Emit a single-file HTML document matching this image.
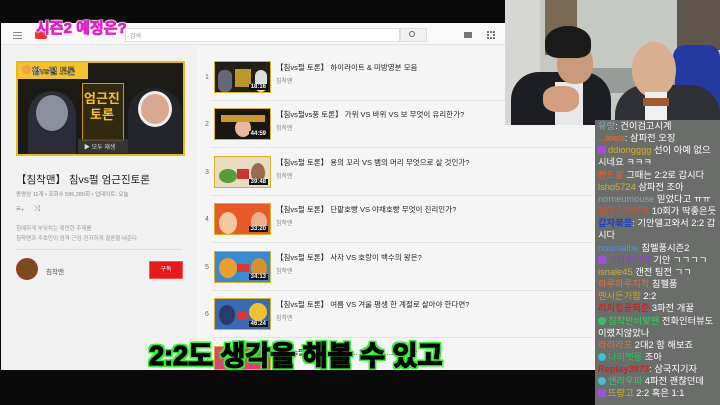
<!DOCTYPE html>
<html><head><meta charset="utf-8"><style>
*{margin:0;padding:0;box-sizing:border-box}
body{width:720px;height:405px;background:#0a0a0a;position:relative;overflow:hidden;font-family:"Liberation Sans","Noto Sans CJK KR",sans-serif}
.a{position:absolute}
.t{white-space:nowrap}
.item .n{position:absolute;left:205px;font-size:7px;color:#666}
.th{position:absolute;left:214px;width:57px;height:32px;border:1px solid #d8b030;overflow:hidden}
.th .d{position:absolute;right:2px;bottom:2px;background:#111;color:#fff;font-size:6px;padding:0 2px;font-weight:bold}
.ti{position:absolute;left:276px;font-size:7.5px;color:#222}
.ch{position:absolute;left:276px;font-size:6px;color:#888}
.hr{position:absolute;left:212px;width:380px;height:1px;background:#e2e2e2}
.chat{position:absolute;left:595px;top:120px;width:125px;height:285px;background:#6b6d6b;font-size:9.3px;line-height:12.15px;color:#fff;padding-left:3px;overflow:hidden}
.chat div{white-space:nowrap}
.b{display:inline-block;width:8px;height:8px;border-radius:1px;vertical-align:-1px;margin-right:2px}
</style></head><body>
<!-- browser -->
<div class="a" style="left:1px;top:23px;width:594px;height:347px;background:#f1f1f1"></div>
<div class="a" style="left:1px;top:23px;width:504px;height:22px;background:#f8f8f8;border-bottom:1px solid #e4e4e4"></div>
<div class="a" style="left:13px;top:32px;width:9px;height:1px;background:#888;box-shadow:0 3px #888,0 6px #888"></div>
<div class="a" style="left:35px;top:31px;width:12px;height:8px;background:#e33;border-radius:2px"></div>
<div class="a" style="left:125px;top:28px;width:275px;height:14px;background:#fff;border:1px solid #ddd;font-size:6px;color:#999;padding:2px 4px">검색</div>
<div class="a" style="left:400px;top:28px;width:27px;height:14px;background:#f0f0f0;border:1px solid #ddd"></div>
<div class="a" style="left:409px;top:31px;width:6px;height:6px;border:1px solid #666;border-radius:50%"></div>
<div class="a" style="left:464px;top:32px;width:8px;height:6px;background:#777"></div>
<div class="a" style="left:487px;top:31px;width:8px;height:8px;border:2px dotted #777"></div>
<div class="a t" style="left:36px;top:17px;font-size:15px;font-weight:bold;color:#e020c8;-webkit-text-stroke:0.8px #e020c8;text-shadow:0 0 1px #fff,1px 1px 1px #fff,-1px -1px 1px #fff,1px -1px 1px #fff,-1px 1px 1px #fff">시즌2 예정은?</div>
<!-- left panel -->
<div class="a" style="left:16px;top:61px;width:169px;height:95px;background:#1b1a15;border:2px solid #e8b822;overflow:hidden">
 <div class="a" style="left:0;top:0;width:70px;height:16px;background:#f2c230"></div>
 <div class="a t" style="left:14px;top:2px;font-size:8.5px;font-weight:bold;color:#fff;-webkit-text-stroke:.5px #222">침vs펄 토론</div>
 <div class="a" style="left:4px;top:2px;width:9px;height:9px;border-radius:50%;background:#f5a040"></div>
 <div class="a" style="left:10px;top:28px;width:48px;height:66px;background:#2a2d35;border-radius:24px 24px 6px 6px"></div>
 <div class="a" style="left:18px;top:32px;width:32px;height:36px;background:#8a8f9a;border-radius:50%"></div>
 <div class="a" style="left:110px;top:25px;width:54px;height:70px;background:#23252a;border-radius:26px 26px 6px 6px"></div>
 <div class="a" style="left:120px;top:28px;width:34px;height:36px;background:#d8a890;border-radius:50%;border:3px solid #eee"></div>
 <div class="a" style="left:64px;top:20px;width:42px;height:58px;background:#322a10;border:1px solid #c89a20"></div>
 <div class="a t" style="left:66px;top:28px;font-size:13px;font-weight:bold;color:#f2c230;line-height:16px;text-align:center">엄근진<br>토론</div>
 <div class="a" style="left:60px;top:76px;width:50px;height:14px;background:rgba(60,60,60,.8)"></div>
 <div class="a t" style="left:66px;top:79px;font-size:6px;color:#ddd">▶ 모두 재생</div>
</div>
<div class="a t" style="left:16px;top:172px;font-size:10.5px;color:#222">【침착맨】 침vs펄 엄근진토론</div>
<div class="a t" style="left:16px;top:190px;font-size:5.5px;color:#888">동영상 11개 • 조회수 586,280회 • 업데이트: 오늘</div>
<div class="a t" style="left:16px;top:204px;font-size:8px;color:#888">≡₊ &nbsp;&nbsp; ⤨</div>
<div class="a t" style="left:16px;top:224px;font-size:5.5px;color:#999;line-height:10px">침예하게 부딪치는 예민한 주제를<br>침착맨과 주호민이 엄격·근엄·진지하게 결론을 내준다</div>
<div class="a" style="left:16px;top:249px;width:166px;height:1px;background:#ddd"></div>
<div class="a" style="left:16px;top:258px;width:22px;height:22px;border-radius:50%;background:#7a4a20;border:1px solid #b03030"></div>
<div class="a t" style="left:46px;top:266px;font-size:6.5px;color:#555">침착맨</div>
<div class="a" style="left:149px;top:261px;width:34px;height:18px;background:#e31b1b;border:1px solid #f55;color:#fff;font-size:6px;text-align:center;line-height:16px">구독</div>
<!-- list -->
<div class="a" style="left:197px;top:46px;width:398px;height:324px;background:#f5f5f5"></div>
<div class="item">
<span class="n" style="top:74px">1</span><div class="th" style="top:61px;background:#242018"><div class="a" style="left:3px;top:8px;width:14px;height:22px;background:#667;border-radius:6px"></div><div class="a" style="left:40px;top:8px;width:12px;height:22px;background:#ddd;border-radius:6px"></div><div class="a" style="left:20px;top:7px;width:16px;height:18px;background:#b89a2a"></div><span class="d">18:16</span></div>
<div class="ti t" style="top:62px">【침vs펄 토론】 하이라이트 &amp; 미방영분 모음</div><div class="ch t" style="top:76px">침착맨</div>
<div class="hr" style="top:100px"></div>
<span class="n" style="top:121px">2</span><div class="th" style="top:108px;background:#1a1612"><div class="a" style="left:20px;top:10px;width:16px;height:18px;background:#e8b8a0;border-radius:50%"></div><div class="a" style="left:6px;top:6px;width:44px;height:7px;background:#c89a30"></div><span class="d">44:59</span></div>
<div class="ti t" style="top:109px">【침vs펄vs풍 토론】 가위 VS 바위 VS 보 무엇이 유리한가?</div><div class="ch t" style="top:123px">침착맨</div>
<div class="hr" style="top:147px"></div>
<span class="n" style="top:169px">3</span><div class="th" style="top:156px;background:#e8dcc0"><div class="a" style="left:4px;top:12px;width:18px;height:14px;background:#5a9a3a;border-radius:50%"></div><div class="a" style="left:36px;top:6px;width:14px;height:20px;background:#9a6a50;border-radius:50%"></div><div class="a" style="left:22px;top:12px;width:12px;height:10px;background:#c33"></div><span class="d">39:48</span></div>
<div class="ti t" style="top:157px">【침vs펄 토론】 용의 꼬리 VS 뱀의 머리 무엇으로 살 것인가?</div><div class="ch t" style="top:171px">침착맨</div>
<div class="hr" style="top:195px"></div>
<span class="n" style="top:216px">4</span><div class="th" style="top:203px;background:#e85a2a"><div class="a" style="left:4px;top:8px;width:18px;height:22px;background:#f4c8a0;border-radius:50%"></div><div class="a" style="left:36px;top:8px;width:16px;height:20px;background:#f0b090;border-radius:50%"></div><span class="d">33:20</span></div>
<div class="ti t" style="top:204px">【침vs펄 토론】 단팥호빵 VS 야채호빵 무엇이 진리인가?</div><div class="ch t" style="top:218px">침착맨</div>
<div class="hr" style="top:242px"></div>
<span class="n" style="top:264px">5</span><div class="th" style="top:251px;background:#3a8ad0"><div class="a" style="left:4px;top:6px;width:18px;height:20px;background:#e8a030;border-radius:50%"></div><div class="a" style="left:36px;top:6px;width:16px;height:20px;background:#d89030;border-radius:50%"></div><div class="a" style="left:22px;top:12px;width:12px;height:8px;background:#d33"></div><span class="d">34:13</span></div>
<div class="ti t" style="top:252px">【침vs펄 토론】 사자 VS 호랑이 백수의 왕은?</div><div class="ch t" style="top:266px">침착맨</div>
<div class="hr" style="top:290px"></div>
<span class="n" style="top:311px">6</span><div class="th" style="top:298px;background:#3a6ab0"><div class="a" style="left:4px;top:6px;width:16px;height:20px;background:#2a3a6a;border-radius:50%"></div><div class="a" style="left:34px;top:4px;width:18px;height:18px;background:#f0c030;border-radius:50%"></div><div class="a" style="left:22px;top:12px;width:10px;height:8px;background:#d33"></div><span class="d">46:24</span></div>
<div class="ti t" style="top:299px">【침vs펄 토론】 여름 VS 겨울 평생 한 계절로 살아야 한다면?</div><div class="ch t" style="top:313px">침착맨</div>
<div class="hr" style="top:337px"></div>
<span class="n" style="top:358px">7</span><div class="th" style="top:346px;height:24px;background:#e0407a"></div>
<div class="ti t" style="top:347px">【침vs펄 토론】 ............. VS 산......... 으로?</div>
</div>
<div class="a t" style="left:149px;top:333px;font-size:27.5px;font-weight:bold;color:#050505;-webkit-text-stroke:1.2px #050505;letter-spacing:-0.3px;text-shadow:2px 0 0 #3e3,-2px 0 0 #3e3,0 2px 0 #3e3,0 -2px 0 #3e3,2px 2px 0 #3e3,-2px -2px 0 #3e3,2px -2px 0 #3e3,-2px 2px 0 #3e3,0 0 4px #2f2">2:2도 생각을 해볼 수 있고</div>
<!-- webcam -->
<div class="a" style="left:505px;top:0;width:215px;height:125px;background:#c6c8c4;overflow:hidden">
 <div class="a" style="left:0;top:0;width:35px;height:125px;background:#d6d6d2"></div>
 <div class="a" style="left:40px;top:0;width:32px;height:55px;background:#7a6a55"></div>
 <div class="a" style="left:172px;top:0;width:43px;height:50px;background:#5e564c"></div>
 <div class="a" style="left:168px;top:45px;width:47px;height:80px;background:#243aa0;border-radius:12px 12px 0 0"></div>
 <div class="a" style="left:70px;top:68px;width:100px;height:25px;background:#9a9c9a"></div>
 <div class="a" style="left:6px;top:72px;width:100px;height:53px;background:#1c1e24;border-radius:28px 28px 0 0"></div>
 <div class="a" style="left:50px;top:82px;width:28px;height:43px;background:#e8e8ea"></div>
 <div class="a" style="left:52px;top:44px;width:36px;height:40px;background:#c89a7a;border-radius:45%"></div>
 <div class="a" style="left:40px;top:26px;width:46px;height:32px;background:#1a1a1a;border-radius:50% 50% 30% 30%"></div>
 <div class="a" style="left:38px;top:86px;width:36px;height:26px;background:#d2a080;border-radius:40%"></div>
 <div class="a" style="left:110px;top:85px;width:105px;height:40px;background:#2e3036;border-radius:30px 30px 0 0"></div>
 <div class="a" style="left:127px;top:42px;width:44px;height:56px;background:#d8b090;border-radius:50%"></div>
 <div class="a" style="left:140px;top:92px;width:22px;height:33px;background:#f0f0f0"></div>
 <div class="a" style="left:138px;top:98px;width:26px;height:8px;background:#a05a30"></div>
</div>
<!-- chat -->
<div class="chat">
<div><span style="color:#8ab">유랑</span>: 건이검고시계</div>
<div><span style="color:#e87030">...leeis</span>: 삼파전 오징</div>
<div><span class="b" style="background:#a050e0"></span><span style="color:#d0b030">ddiongggg</span> 선이 아예 없으</div>
<div>시네요 ㅋㅋㅋ</div>
<div><span style="color:#e86020">빤드팔</span> 그때는 2:2로 갑시다</div>
<div><span style="color:#d0b040">lsho5724</span> 삼파전 조아</div>
<div><span style="color:#90a0a8">nomeumouse</span> 믿었다고 ㅠㅠ</div>
<div><span style="color:#e04a2a">향에스케이며</span> 10회가 딱좋은듯</div>
<div><span style="color:#2040c0;font-weight:bold">갑자볶음</span>: 기안델고와서 2:2 갑</div>
<div>시다</div>
<div><span style="color:#6090d0">noomalbe</span> 침멜풍시즌2</div>
<div><span class="b" style="background:#a050e0"></span><span style="color:#8a40d0">게집딜거야</span> 기안 ㄱㄱㄱㄱ</div>
<div><span style="color:#c8b040">isnale45</span> 갠전 팀전 ㄱㄱ</div>
<div><span style="color:#e07040">하루하루지적</span> 침펠풍</div>
<div><span style="color:#d0a020">펜시든가함</span> 2:2</div>
<div><span style="color:#d02020;font-weight:bold">리치킹공혁준</span> 3파전 개꿀</div>
<div><span class="b" style="background:#30c070;border-radius:50%"></span><span style="color:#30d060">침착만비맞팬</span> 전화인터뷰도</div>
<div>이랬지않았나</div>
<div><span style="color:#e07040">라리라포</span> 2대2 함 해보죠</div>
<div><span class="b" style="background:#40c0d0;border-radius:50%"></span><span style="color:#30c060">나의멧등</span> 조아</div>
<div><span style="color:#d02020;font-weight:bold">Replay3973</span>: 삼국지기자</div>
<div><span class="b" style="background:#40c0d0;border-radius:50%"></span><span style="color:#30d060">앤라우파</span> 4파전 괜찮던데</div>
<div><span class="b" style="background:#a050e0"></span><span style="color:#d0b030">뜨랑고</span> 2:2 혹은 1:1</div>
</div>
</body></html>
